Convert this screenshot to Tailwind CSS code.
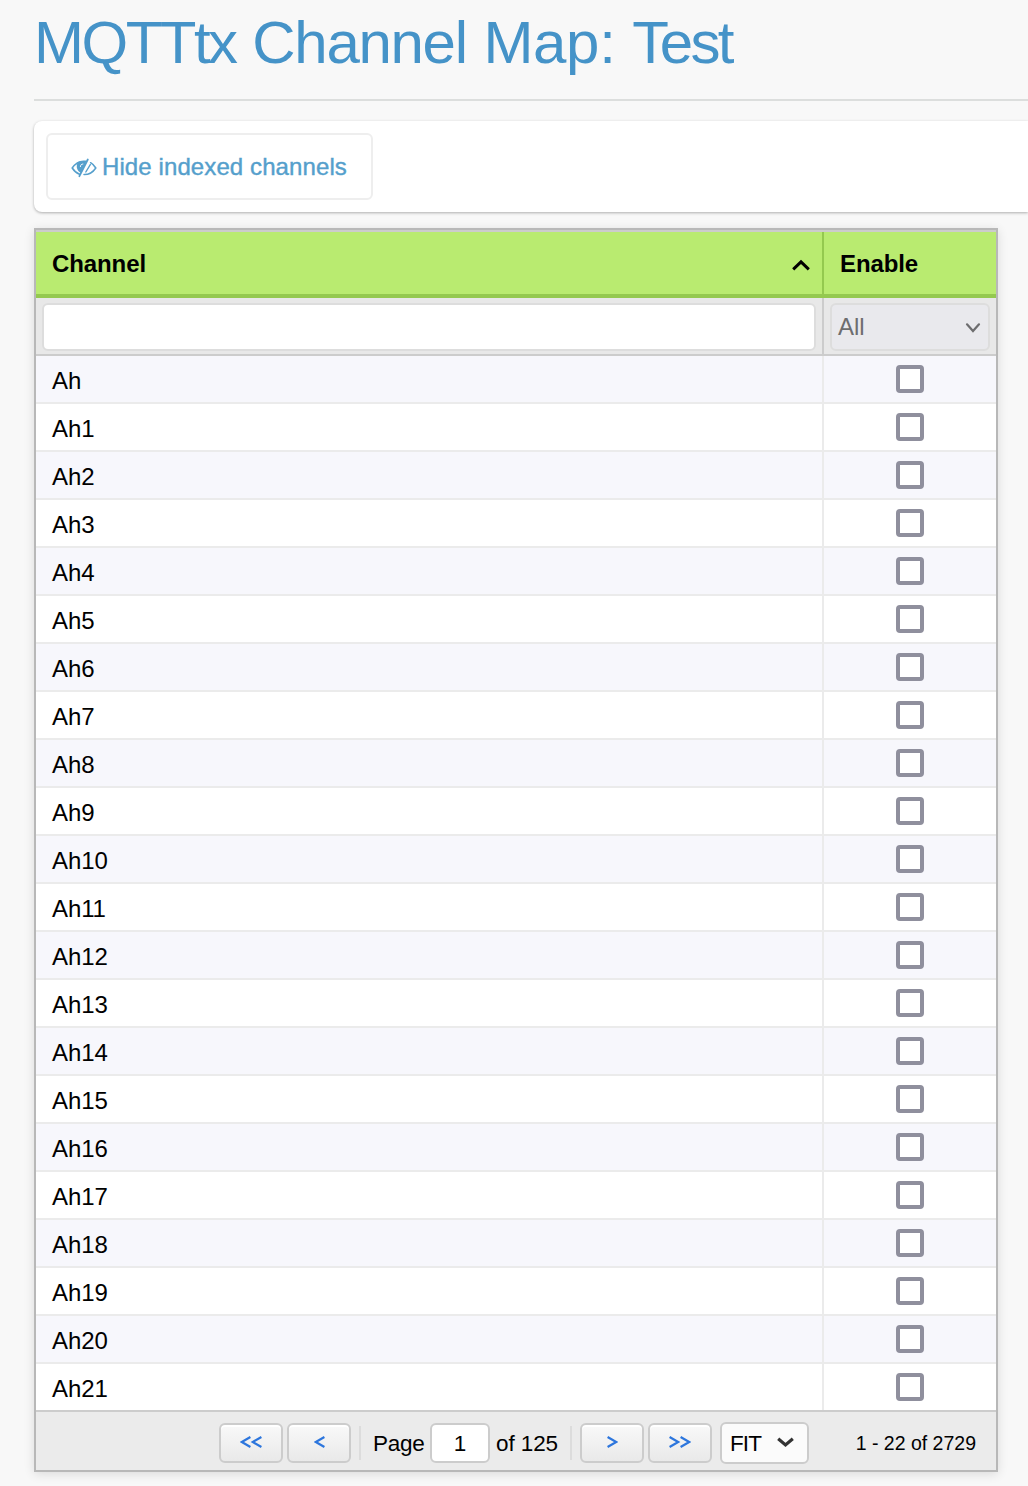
<!DOCTYPE html>
<html lang="en">
<head>
  <meta charset="UTF-8" />
  <meta name="viewport" content="width=device-width, initial-scale=1.0"/>
  <title>MQTTtx Channel Map: Test</title>
  <script src="https://cdn.jsdelivr.net/npm/@tailwindcss/browser@4"></script>
</head>
<body class="h-[1486px] overflow-hidden bg-[#f8f8f8] pl-[34px] font-['Liberation_Sans',sans-serif] text-2xl text-black">

  <!-- Title -->
  <header class="h-[101px] border-b-2 border-[#dcdedd] pt-[9px]">
    <h1 class="text-[60px] leading-[68px] whitespace-nowrap text-[#4593c8]"><span class="tracking-[-2.5px]">MQTTtx</span> <span class="tracking-[-1.3px]">Channel</span> <span class="tracking-[-0.3px]">Map:</span> <span class="tracking-[-2.6px]">Test</span></h1>
  </header>

  <!-- Toolbar -->
  <div class="mt-5 h-[91px] rounded-l-lg bg-white p-3 shadow-[0_1px_3px_rgba(0,0,0,0.3)]">
    <button class="flex h-[67px] w-[327px] items-center rounded-md border-2 border-[#eeeeee] pl-[23px] text-[#559fcc]">
      <svg class="mt-0.5 mr-[5px] h-5 w-[26px]" viewBox="0 0 26 20" fill="none" stroke="currentColor" stroke-width="1.5" stroke-linecap="round">
        <path d="M16.8 1.5 L8.4 18.2" stroke-width="1.8"/>
        <path d="M14.6 3.3 C8.5 2.4 4 5.8 1.2 10 C3 12.8 5.3 15 8.5 16.2"/>
        <path d="M6.8 4.2 C4.7 8.6 5.8 12.4 9.9 15 L15.2 3.8 C11.5 2.8 8.5 3.2 6.8 4.2 Z" fill="currentColor" stroke="none"/>
        <path d="M9.4 8.6 C9.4 7 10.4 6 11.9 6" stroke="#fff" stroke-width="0.9"/>
        <path d="M19.6 4.7 C21.8 6 23.5 7.8 24.8 10 C22 14.2 18 16.7 13 16.6"/>
        <path d="M19.3 6.6 L14.8 14" stroke-width="1.4"/>
      </svg>
      <span class="tracking-[0.1px] [-webkit-text-stroke:0.4px_currentColor]">Hide indexed channels</span>
    </button>
  </div>

  <!-- Channel table -->
  <main class="mt-4 h-[1244px] w-[964px] border-2 border-[#b8b8b8] bg-white shadow-[0_2px_10px_rgba(0,0,0,0.12)]">
    <div class="grid h-[68px] grid-cols-[788px_1fr] border-t-2 border-b-4 border-t-[#cccccc] border-b-[#94c94f] bg-[#b9eb70] font-bold">
      <div class="flex items-center justify-between border-r-2 border-[#94c94f] pt-0.5 pr-3 pl-4">
        <span class="tracking-[-0.1px]">Channel</span>
        <svg class="mt-0.5 h-3 w-[18px]" viewBox="0 0 18 12" fill="none" stroke="currentColor" stroke-width="3">
          <path d="M1.2 10.3 L9 2.8 L16.8 10.3"/>
        </svg>
      </div>
      <div class="flex items-center pt-0.5 pl-4 tracking-[-0.1px]">Enable</div>
    </div>

    <div class="grid h-[58px] grid-cols-[788px_1fr] border-b-2 border-[#cccccc] bg-[#e8e8e8]">
      <div class="border-r-2 border-[#cccccc] pt-[5px] pr-[6px] pl-[6px]">
        <input type="text" class="block h-12 w-full rounded-md border-2 border-[#dddddd] bg-white px-2 outline-none" />
      </div>
      <div class="px-[6px] pt-[5px]">
        <div class="flex h-12 items-center justify-between rounded-md border-2 border-[#dddddd] bg-[#e9e9ed] pr-[7px] pl-1.5 text-[#6d6d6f]">
          <span>All</span>
          <svg class="mt-0.5 h-3 w-4" viewBox="0 0 16 12" fill="none" stroke="currentColor" stroke-width="2.2" stroke-linecap="round">
            <path d="M2 2.3 L8 9 L14 2.3"/>
          </svg>
        </div>
      </div>
    </div>

    <div id="channel-rows"></div>

    <!-- Pager -->
    <footer class="flex h-[58px] items-center bg-[#ebebeb] pt-[3px] pl-[183px]">
      <button class="h-10 w-16 shrink-0 rounded-md border-2 border-[#cccccc] bg-linear-to-b from-[#f9f9f9] to-[#e9e9e9] pb-0.5 shadow-[inset_0_2px_0_#ffffff]">
        <svg class="mx-auto h-3 w-[22px]" viewBox="0 0 22 12" fill="none" stroke="#2d76dd" stroke-width="2.2"><path d="M10.4 1 L1.8 6 L10.4 11 M21.4 1 L12.8 6 L21.4 11"/></svg>
      </button>
      <button class="ml-1 h-10 w-16 shrink-0 rounded-md border-2 border-[#cccccc] bg-linear-to-b from-[#f9f9f9] to-[#e9e9e9] pb-0.5 shadow-[inset_0_2px_0_#ffffff]">
        <svg class="mx-auto h-3 w-[11px]" viewBox="0 0 11 12" fill="none" stroke="#2d76dd" stroke-width="2.2"><path d="M10.4 1 L1.8 6 L10.4 11"/></svg>
      </button>
      <span class="ml-2 h-[34px] w-0.5 shrink-0 bg-[#dcdcdc]"></span>
      <span class="ml-3 w-[57px] shrink-0 pt-0.5 text-[22.5px] tracking-[-0.3px]">Page</span>
      <input type="text" value="1" class="h-10 w-[60px] shrink-0 rounded-md border-2 border-[#cccccc] bg-white pt-0.5 text-center text-[22.5px] outline-none" />
      <span class="ml-1.5 w-[74px] shrink-0 pt-0.5 text-[22.5px] tracking-[-0.1px] whitespace-nowrap">of 125</span>
      <span class="h-[34px] w-0.5 shrink-0 bg-[#dcdcdc]"></span>
      <button class="ml-2 h-10 w-16 shrink-0 rounded-md border-2 border-[#cccccc] bg-linear-to-b from-[#f9f9f9] to-[#e9e9e9] pb-0.5 shadow-[inset_0_2px_0_#ffffff]">
        <svg class="mx-auto h-3 w-[11px]" viewBox="0 0 11 12" fill="none" stroke="#2d76dd" stroke-width="2.2"><path d="M0.6 1 L9.2 6 L0.6 11"/></svg>
      </button>
      <button class="ml-1 h-10 w-16 shrink-0 rounded-md border-2 border-[#cccccc] bg-linear-to-b from-[#f9f9f9] to-[#e9e9e9] pb-0.5 shadow-[inset_0_2px_0_#ffffff]">
        <svg class="mx-auto h-3 w-[22px]" viewBox="0 0 22 12" fill="none" stroke="#2d76dd" stroke-width="2.2"><path d="M0.6 1 L9.2 6 L0.6 11 M11.6 1 L20.2 6 L11.6 11"/></svg>
      </button>
      <div class="ml-2 flex h-[42px] w-[89px] shrink-0 items-center justify-between rounded-md border-2 border-[#cccccc] bg-[#fbfbfb] pr-[13px] pl-2">
        <span class="pt-0.5 text-[22.5px] tracking-[-0.9px]">FIT</span>
        <svg class="h-[11px] w-[17px]" viewBox="0 0 17 11" fill="none" stroke="#333333" stroke-width="3.2"><path d="M1.2 1.8 L8.5 8 L15.8 1.8"/></svg>
      </div>
      <span class="ml-auto pr-5 text-[19.5px] whitespace-nowrap">1 - 22 of 2729</span>
    </footer>
  </main>

  <script>
    const rows = document.getElementById('channel-rows');

    for (let i = 0; i < 22; i++) {
      const name = i === 0 ? 'Ah' : `Ah${i}`;
      const row = document.createElement('div');
      row.className = 'grid h-12 grid-cols-[788px_1fr] border-b-2 border-[#ebebeb] odd:bg-[#f7f7fc] even:bg-white last:border-[#cccccc]';
      row.innerHTML = `
        <div class="flex items-center border-r-2 border-[#ebebeb] pt-[3px] pl-4 tracking-[-0.1px]">${name}</div>
        <div class="flex items-center justify-center">
          <input type="checkbox" class="size-7 appearance-none rounded-[4px] border-4 border-[#8f8f9d] bg-white" />
        </div>
      `;
      rows.appendChild(row);
    }
  </script>

</body>
</html>
